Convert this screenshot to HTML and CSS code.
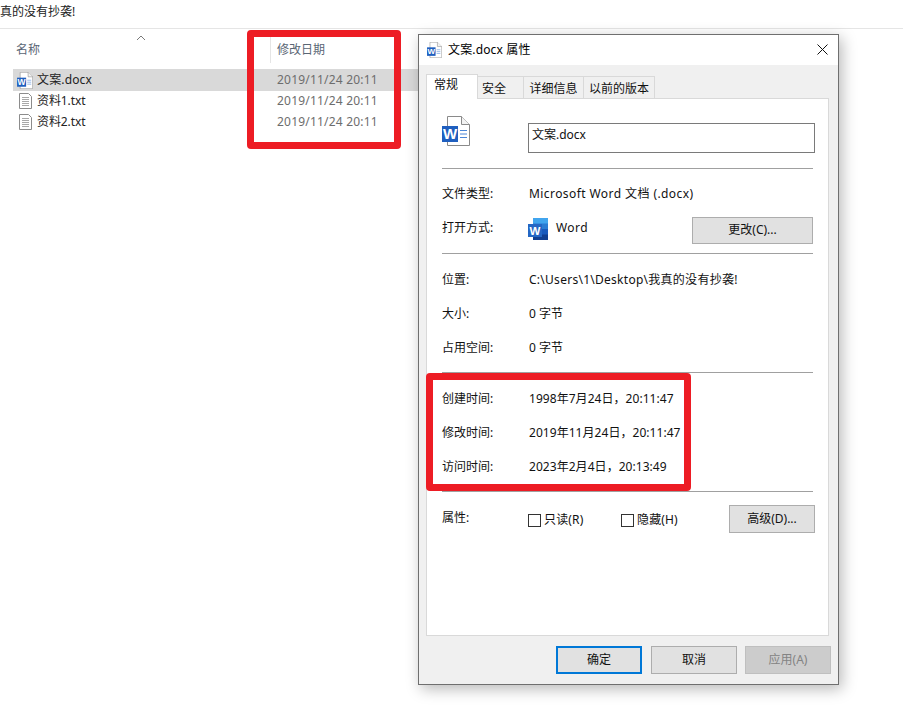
FILE: index.html
```html
<!DOCTYPE html>
<html lang="zh-CN">
<head>
<meta charset="utf-8">
<title>文案.docx 属性</title>
<link rel="stylesheet" href="styles.css">
</head>
<body>
<svg class="defs" width="0" height="0" aria-hidden="true">
  <symbol id="doc" viewBox="0 0 28 30">
    <path d="M5.5 .5H19.5L27.5 8.5V29.5H5.5Z" fill="#fff" stroke="#8a8a8a"/>
    <path d="M19.5 .5V8.5H27.5" fill="#f2f2f2" stroke="#8a8a8a"/>
    <rect x="0" y="10" width="16" height="16" fill="#1f5fbf"/>
    <text x="8" y="23.4" class="w-mark" font-size="15">W</text>
    <path d="M18 14.5H25M18 18H25M18 21.500H25" stroke="#4a86d8" fill="none"/>
  </symbol>
  <symbol id="txt" viewBox="0 0 13 16">
    <path d="M.5 .5H9.500L12.500 3.500V15.500H.5Z" fill="#fff" stroke="#8c8c8c"/>
    <path d="M3 4.500H10M3 6.500H10M3 8.500H10M3 10.500H10M3 12.500H10" stroke="#a8a8a8" fill="none"/>
  </symbol>
  <symbol id="word" viewBox="0 0 20 22">
    <rect x="5" y="0" width="15" height="6" fill="#41a5ee"/>
    <rect x="5" y="5.500" width="15" height="6" fill="#2b7cd3"/>
    <rect x="5" y="11" width="15" height="6" fill="#185abd"/>
    <rect x="5" y="16.500" width="15" height="5.500" fill="#103f91"/>
    <rect x="0" y="6" width="14" height="13" fill="#2467c4"/>
    <text x="7" y="16.600" class="w-mark" font-size="11.500">W</text>
  </symbol>
</svg>

<main class="explorer">
  <div class="crumb">真的没有抄袭!</div>
  <div class="col-head">
    <span class="col-name">名称</span>
    <svg class="sort" width="10" height="6" viewBox="0 0 10 6"><path d="M1 5L5 1L9 5" fill="none" stroke="#7a7a7a"/></svg>
    <span class="col-date">修改日期</span>
  </div>
  <ul class="files">
    <li class="file selected">
      <span class="file-name"><svg class="file-icon" width="16" height="17"><use href="#doc"/></svg>文案.docx</span>
      <span class="file-date">2019/11/24 20:11</span>
    </li>
    <li class="file">
      <span class="file-name plain"><svg class="file-icon txt" width="13" height="16"><use href="#txt"/></svg>资料1.txt</span>
      <span class="file-date">2019/11/24 20:11</span>
    </li>
    <li class="file">
      <span class="file-name plain"><svg class="file-icon txt" width="13" height="16"><use href="#txt"/></svg>资料2.txt</span>
      <span class="file-date">2019/11/24 20:11</span>
    </li>
  </ul>
</main>

<div class="mark mark-date"></div>

<section class="dialog">
  <header class="titlebar">
    <svg class="title-icon" width="15" height="16"><use href="#doc"/></svg>
    <span class="title-text">文案.docx 属性</span>
    <svg class="close" width="11" height="11" viewBox="0 0 11 11"><path d="M.5 .5L10.500 10.500M10.500 .5L.5 10.500" stroke="#111" fill="none"/></svg>
  </header>
  <div class="body">
    <nav class="tabs">
      <span class="tab active">常规</span>
      <span class="tab t2">安全</span>
      <span class="tab t3">详细信息</span>
      <span class="tab t4">以前的版本</span>
    </nav>
    <div class="panel">
      <div class="sec head">
        <svg class="big-icon" width="28" height="30"><use href="#doc"/></svg>
        <div class="name-input">文案.docx</div>
      </div>
      <div class="sec">
        <div class="row"><span>文件类型:</span><span class="wide">Microsoft Word 文档 (.docx)</span></div>
        <div class="row">
          <span>打开方式:</span>
          <span class="app"><svg class="word" width="20" height="22"><use href="#word"/></svg><span class="wide">Word</span></span>
          <button class="btn change">更改(C)...</button>
        </div>
      </div>
      <div class="sec lower">
        <div class="row"><span>位置:</span><span class="path">C:\Users\1\Desktop\我真的没有抄袭!</span></div>
        <div class="row"><span>大小:</span><span>0 字节</span></div>
        <div class="row"><span>占用空间:</span><span>0 字节</span></div>
      </div>
      <div class="sec lower">
        <div class="row"><span>创建时间:</span><span class="time">1998年7月24日，20:11:47</span></div>
        <div class="row"><span>修改时间:</span><span class="time">2019年11月24日，20:11:47</span></div>
        <div class="row"><span>访问时间:</span><span class="time">2023年2月4日，20:13:49</span></div>
      </div>
      <div class="attrs">
        <span class="attr-label">属性:</span>
        <span class="check first"><i class="box"></i>只读(R)</span>
        <span class="check"><i class="box"></i>隐藏(H)</span>
        <button class="btn advanced">高级(D)...</button>
      </div>
    </div>
    <footer class="actions">
      <button class="btn primary">确定</button>
      <button class="btn">取消</button>
      <button class="btn disabled">应用(A)</button>
    </footer>
  </div>
</section>

<div class="mark mark-time"></div>
</body>
</html>
```
FILE: styles.css
```css
* { box-sizing: border-box; }
html, body { margin: 0; padding: 0; }
body {
  position: relative;
  width: 903px;
  height: 712px;
  overflow: hidden;
  background: #fff;
  color: #111;
  font: 12px/16px "Noto Sans", "Noto Sans CJK SC", sans-serif;
}
.defs { display: none; }
.w-mark {
  fill: #fff;
  font-family: "Liberation Sans", sans-serif;
  font-weight: 700;
  text-anchor: middle;
}

/* explorer */
.explorer { width: 903px; }
.crumb {
  height: 29px;
  padding-top: 4px;
  border-bottom: 1px solid #e5e5e5;
  color: #222;
}
.col-head {
  position: relative;
  height: 40px;
  color: #5a6675;
}
.col-name { position: absolute; left: 16px; top: 13px; }
.sort { position: absolute; left: 136px; top: 6px; }
.col-date {
  position: absolute;
  left: 270px;
  top: 4px;
  height: 30px;
  padding: 9px 0 0 6px;
  border-left: 1px solid #e5e5e5;
}
.files { list-style: none; margin: 0 0 0 13px; padding: 0; width: 406px; }
.file { display: flex; align-items: center; height: 21px; padding-bottom: 2px; color: #222; }
.file.selected { height: 22px; padding-bottom: 0; background: #d9d9d9; }
.file-name { display: flex; align-items: center; width: 264px; padding-left: 4px; letter-spacing: .15px; }
.file-name.plain { letter-spacing: -.1px; }
.file-icon { margin-right: 4px; }
.file-icon.txt { margin-left: 2px; margin-right: 5px; }
.file-date { color: #6d6d6d; letter-spacing: .2px; }

/* annotations */
.mark {
  position: absolute;
  border: 7px solid #ed1c24;
  border-radius: 4px;
  z-index: 3;
}
.mark-date { left: 247px; top: 30px; width: 154px; height: 119px; }
.mark-time { left: 426px; top: 373px; width: 265px; height: 118px; }

/* dialog */
.dialog {
  position: absolute;
  left: 418px;
  top: 34px;
  width: 421px;
  height: 651px;
  display: flex;
  flex-direction: column;
  border: 1px solid #6f6f6f;
  background: #f0f0f0;
  box-shadow: 3px 4px 14px rgba(0, 0, 0, .28);
}
.titlebar {
  display: flex;
  align-items: center;
  height: 30px;
  padding: 0 10px 0 8px;
  background: #fff;
  color: #000;
}
.title-text { margin-left: 6px; letter-spacing: .15px; }
.close { margin-left: auto; margin-bottom: 1px; }
.body { flex: 1; display: flex; flex-direction: column; padding: 9px 9px 0 7px; }
.tabs { display: flex; align-items: flex-end; height: 24px; position: relative; z-index: 1; }
.tab {
  height: 22px;
  padding-top: 4px;
  text-align: center;
  border: 1px solid #d9d9d9;
  border-left: 0;
  border-bottom: 0;
  background: #f0f0f0;
}
.tab.active {
  width: 52px;
  height: 25px;
  margin-bottom: -1px;
  padding: 2px 0 0 7px;
  text-align: left;
  border-left: 1px solid #d9d9d9;
  background: #fff;
}
.t2 { width: 46px; padding-left: 4px; text-align: left; }
.t3 { width: 60px; }
.t4 { width: 71px; }
.panel {
  height: 538px;
  width: 403px;
  padding: 0 15px;
  border: 1px solid #d9d9d9;
  background: #fff;
}
.sec { padding: 8px 0; border-bottom: 1px solid #a0a0a0; }
.sec.head {
  display: flex;
  height: 70px;
  padding: 17px 0 0;
}
.big-icon { flex: none; width: 28px; height: 30px; }
.name-input {
  width: 287px;
  height: 30px;
  margin: 7px -3px 0 58px;
  padding: 3px;
  border: 1px solid #7a7a7a;
  flex: none;
}
.row {
  display: flex;
  align-items: center;
  height: 34px;
}
.row > span:first-child { width: 87px; flex: none; }
.sec.lower .row { padding-top: 2px; }
.wide { letter-spacing: .42px; }
.path { letter-spacing: .27px; }
.time { letter-spacing: .05px; }
.app { display: flex; align-items: center; }
.word { margin-right: 8px; margin-left: -1px; margin-top: 2px; }
.btn {
  width: 86px;
  height: 28px;
  padding: 0;
  border: 1px solid #adadad;
  background: #e1e1e1;
  color: #111;
  font: inherit;
}
.change { width: 121px; height: 27px; margin: 4px 0 0 auto; }
.attrs { display: flex; align-items: flex-start; padding-top: 13px; margin-right: -2px; }
.attr-label { width: 86px; flex: none; padding-top: 5px; }
.check { display: flex; align-items: center; height: 30px; letter-spacing: .15px; }
.check.first { width: 93px; }
.box {
  width: 13px;
  height: 13px;
  margin-right: 3px;
  border: 1px solid #333;
  background: #fff;
}
.advanced { margin-left: auto; }
.actions { display: flex; justify-content: flex-end; gap: 9px; padding-top: 10px; margin-right: -2px; }
.btn.primary { border: 2px solid #0078d7; }
.btn.disabled { margin-left: -1px; background: #ccc; border-color: #bfbfbf; color: #838383; }
```
